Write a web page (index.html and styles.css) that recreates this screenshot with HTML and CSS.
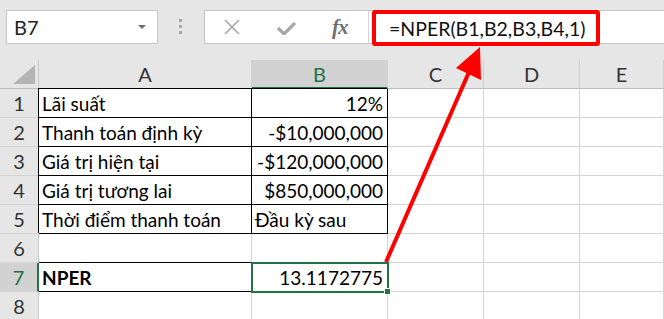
FILE: index.html
```html
<!DOCTYPE html>
<html lang="vi">
<head>
  <meta charset="UTF-8" />
  <title>NPER</title>
  <link rel="stylesheet" href="styles.css">
</head>
<body>
  <div class="toolbar">
    <div class="namebox">
      <span>B7</span>
      <span class="caret"></span>
    </div>
    <div class="grip"><i></i><i></i><i></i></div>
    <div class="formula">
      <div class="icons">
        <svg class="ico" width="18" height="14" viewBox="0 0 18 14">
          <path d="M2 0 L16 14 M16 0 L2 14" stroke="#a6a6a6" stroke-width="1.6" fill="none"/>
        </svg>
        <svg class="ico check" width="19" height="13" viewBox="0 0 19 13">
          <path d="M1 6 L7 12 L18 1" stroke="#a6a6a6" stroke-width="3.2" fill="none"/>
        </svg>
        <span class="fx">fx</span>
      </div>
      <div class="hl">=NPER(B1,B2,B3,B4,1)</div>
    </div>
  </div>

  <div class="sheet">
    <div class="corner">
      <svg width="22" height="19" viewBox="0 0 22 19"><polygon points="22,0 22,19 0,19" fill="#b4b4b4"/></svg>
    </div>
    <div class="ch">A</div>
    <div class="ch sel">B</div>
    <div class="ch">C</div>
    <div class="ch">D</div>
    <div class="ch">E</div>

    <div class="rh">1</div>
    <div class="c bx">Lãi suất</div>
    <div class="c bx r">12%</div>
    <div class="c"></div><div class="c"></div><div class="c"></div>

    <div class="rh">2</div>
    <div class="c bx">Thanh toán định kỳ</div>
    <div class="c bx r">-$10,000,000</div>
    <div class="c"></div><div class="c"></div><div class="c"></div>

    <div class="rh">3</div>
    <div class="c bx">Giá trị hiện tại</div>
    <div class="c bx r">-$120,000,000</div>
    <div class="c"></div><div class="c"></div><div class="c"></div>

    <div class="rh">4</div>
    <div class="c bx">Giá trị tương lai</div>
    <div class="c bx r">$850,000,000</div>
    <div class="c"></div><div class="c"></div><div class="c"></div>

    <div class="rh">5</div>
    <div class="c bx">Thời điểm thanh toán</div>
    <div class="c bx">Đầu kỳ sau</div>
    <div class="c"></div><div class="c"></div><div class="c"></div>

    <div class="rh">6</div>
    <div class="c dk"></div>
    <div class="c dk"></div>
    <div class="c"></div><div class="c"></div><div class="c"></div>

    <div class="rh sel">7</div>
    <div class="c dk bold">NPER</div>
    <div class="c dk r active">13.1172775<span class="handle"></span></div>
    <div class="c"></div><div class="c"></div><div class="c"></div>

    <div class="rh">8</div>
    <div class="c"></div><div class="c"></div>
    <div class="c"></div><div class="c"></div><div class="c"></div>
  </div>

  <!-- callout arrow from B7 to the formula -->
  <svg class="arrow" width="664" height="319" viewBox="0 0 664 319">
    <line x1="386" y1="262" x2="469" y2="72" stroke="#ff0000" stroke-width="4"/>
    <polygon points="480,47 481,80 456,68" fill="#ff0000"/>
  </svg>
</body>
</html>
```

FILE: styles.css
```css
* {
  box-sizing: border-box;
}
body {
  margin: 0;
  width: 664px;
  height: 319px;
  overflow: hidden;
  position: relative;
  background-color: #e6e6e6;
  font-family: Lato, "Open Sans", sans-serif;
  color: #000;
}
.toolbar {
  height: 60px;
  display: flex;
  align-items: flex-start;
  padding: 10px 0 0 6px;
}
.namebox {
  width: 152px;
  height: 34px;
  background-color: #fff;
  border: 1px solid #c6c6c6;
  display: flex;
  align-items: center;
  justify-content: space-between;
  padding: 0 11px 0 7px;
  font-size: 20px;
  color: #222;
}
.caret {
  width: 0;
  height: 0;
  border-left: 4px solid transparent;
  border-right: 4px solid transparent;
  border-top: 4px solid #6e6e6e;
}
.grip {
  width: 4px;
  margin: 9px 21px 0;
  display: flex;
  flex-direction: column;
  gap: 3px;
}
.grip i {
  display: block;
  width: 3px;
  height: 3px;
  background-color: #a8a8a8;
}
.formula {
  flex: 1;
  height: 34px;
  background-color: #fff;
  border: 1px solid #c6c6c6;
  border-right: none;
  display: flex;
  align-items: flex-start;
}
.icons {
  width: 164px;
  height: 32px;
  flex-shrink: 0;
  display: flex;
  align-items: center;
  padding-left: 18px;
  border-right: 1px solid #d4d4d4;
}
.ico {
  margin-right: 36px;
}
.check {
  margin-top: 2px;
}
.fx {
  font-family: "Liberation Serif", serif;
  font-style: italic;
  font-weight: bold;
  font-size: 21px;
  color: #707070;
  letter-spacing: -1px;
}
.hl {
  width: 228px;
  height: 36px;
  margin: -1px 0 0 3px;
  border: 4px solid #ff0000;
  border-radius: 3px;
  display: flex;
  align-items: center;
  padding-left: 13px;
  font-size: 19.5px;
  color: #111;
  background-color: #fff;
}
.sheet {
  display: grid;
  grid-template-columns: 39px 213px 136px 96px 96px 1fr;
  grid-auto-rows: 29px;
  background-color: #fff;
}
.corner, .ch, .rh {
  background-color: #e6e6e6;
  border-right: 1px solid #c8c8c8;
  border-bottom: 1px solid #bdbdbd;
  display: flex;
  align-items: center;
  justify-content: center;
  font-size: 20px;
  color: #333;
}
.ch {
  border-right-color: #d0d0d0;
}
.corner {
  align-items: flex-end;
  justify-content: flex-end;
  padding: 0 3px 4px 0;
}
.rh {
  border-bottom-color: #d4d4d4;
}
.ch.sel {
  background-color: #d2d2d2;
  color: #217346;
  border-bottom: 2px solid #217346;
}
.rh.sel {
  background-color: #d2d2d2;
  color: #217346;
  border-right: 2px solid #217346;
}
.c {
  border-right: 1px solid #d4d4d4;
  border-bottom: 1px solid #d4d4d4;
  display: flex;
  align-items: flex-end;
  padding: 0 4px 2px 3px;
  font-size: 19px;
  white-space: nowrap;
  position: relative;
}
.c.r {
  justify-content: flex-end;
}
.c.bx {
  border-right-color: #000;
  border-bottom-color: #000;
  box-shadow: -1px -1px 0 0 #000;
}
.c.dk {
  border-bottom-color: #000;
}
.bold {
  font-weight: bold;
}
.active {
  outline: 2px solid #217346;
  outline-offset: -1px;
  z-index: 1;
}
.handle {
  position: absolute;
  right: -4px;
  bottom: -4px;
  width: 7px;
  height: 7px;
  background-color: #217346;
  border: 1px solid #fff;
}
.arrow {
  position: absolute;
  left: 0;
  top: 0;
  pointer-events: none;
}
```
